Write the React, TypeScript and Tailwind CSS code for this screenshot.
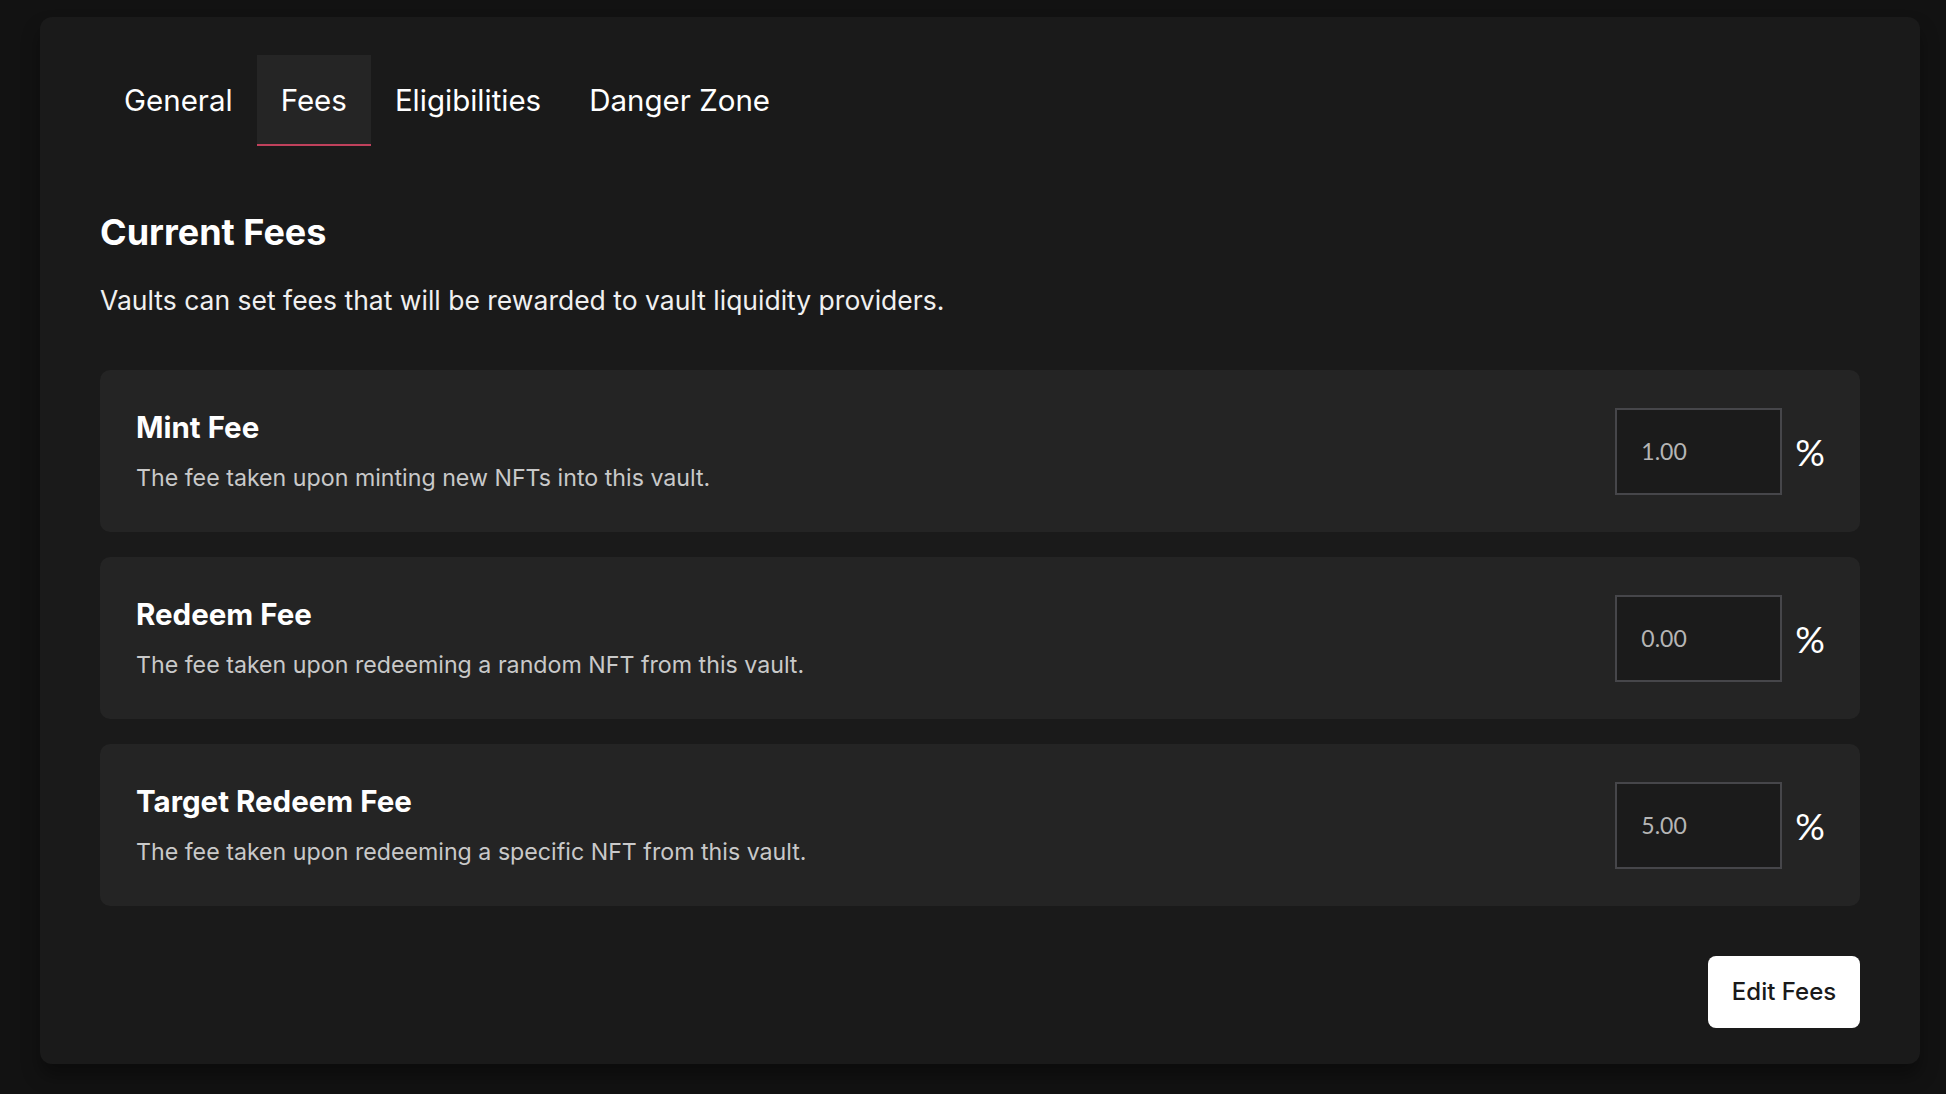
import React from "react";

const fees = [
  { title: "Mint Fee", desc: "The fee taken upon minting new NFTs into this vault.", value: "1.00" },
  { title: "Redeem Fee", desc: "The fee taken upon redeeming a random NFT from this vault.", value: "0.00" },
  { title: "Target Redeem Fee", desc: "The fee taken upon redeeming a specific NFT from this vault.", value: "5.00" },
];

const tabs = ["General", "Fees", "Eligibilities", "Danger Zone"];

export default function App() {
  return (
    <div
      className="min-h-screen w-full bg-[#121212] pl-[40px] pr-[26px] pt-[17px] pb-[30px]"
      style={{ fontFamily: "Inter, 'Noto Sans', sans-serif" }}
    >
      <div className="flex flex-col rounded-[12px] bg-[#1a1a1a] px-[60px] pt-[38px] pb-[36px] shadow-[0_12px_18px_rgba(0,0,0,0.35)]">
        <div className="flex">
          {tabs.map((t) => (
            <div
              key={t}
              className={
                t === "Fees"
                  ? "flex h-[91px] items-center border-b-2 border-[#c0415c] bg-[#252525] px-[24px] pt-[2px] text-[29.5px] text-white"
                  : "flex h-[91px] items-center border-b-2 border-transparent px-[24px] pt-[2px] text-[29.5px] text-white"
              }
            >
              {t}
            </div>
          ))}
        </div>

        <h2 className="mt-[64px] text-[36px] font-bold leading-[44px] text-white">Current Fees</h2>
        <p className="mt-[30px] text-[26.5px] leading-[32px] text-[#f0f0f0]">
          Vaults can set fees that will be rewarded to vault liquidity providers.
        </p>

        <div className="mt-[54px] flex flex-col gap-[25px]">
          {fees.map((f) => (
            <div
              key={f.title}
              className="flex h-[162px] items-center justify-between rounded-[10px] bg-[#242424] pl-[36px] pr-[35px]"
            >
              <div className="flex flex-col">
                <div className="text-[29.5px] font-bold leading-[36px] text-white">{f.title}</div>
                <div className="mt-[18px] text-[23.2px] leading-[30px] text-[#c9c9c9]">{f.desc}</div>
              </div>
              <div className="flex items-center gap-[13px]">
                <div
                  className="flex h-[87px] w-[167px] items-center border-2 border-[#46464a] bg-[#1b1b1b] pl-[24px] text-[23px] text-[#b5b5b5]"
                  style={{ fontFamily: "Lato, sans-serif" }}
                >
                  {f.value}
                </div>
                <span className="text-[37px] leading-none text-white" style={{ fontFamily: "Lato, sans-serif" }}>
                  %
                </span>
              </div>
            </div>
          ))}
        </div>

        <div className="mt-[50px] flex justify-end">
          <button className="h-[72px] w-[152px] rounded-[8px] bg-white text-[24px] font-medium text-[#1a1a1a]">
            Edit Fees
          </button>
        </div>
      </div>
    </div>
  );
}
